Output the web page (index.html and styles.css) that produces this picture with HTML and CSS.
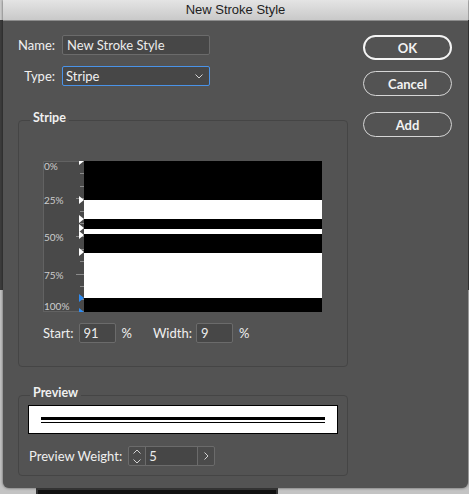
FILE: index.html
```html
<!DOCTYPE html>
<html lang="en">
<head>
    <meta charset="utf-8">
    <title>New Stroke Style</title>
    <link rel="stylesheet" href="styles.css">
</head>
<body>
<div class="window">
    <div class="titlebar">New Stroke Style</div>
    <div class="dialog">
        <div class="main">
            <div class="field-row">
                <label class="field-label" for="styleName">Name:</label>
                <input class="text-input" id="styleName" type="text" value="New Stroke Style">
            </div>
            <div class="field-row type-row">
                <label class="field-label">Type:</label>
                <div class="select">
                    <span>Stripe</span>
                    <svg class="chevron" width="8" height="5" viewBox="0 0 8 5">
                        <path d="M0.5 0.5L4 4L7.5 0.5" />
                    </svg>
                </div>
            </div>

            <fieldset class="group stripe-group">
                <legend>Stripe</legend>
                <div class="stripe-editor">
                    <svg class="ruler" width="41" height="151" viewBox="0 0 41 151">
                        <rect width="41" height="151" fill="#494949" />
                        <path d="M0.5 151V0.5H41M0 150.5H41" stroke="#626262" fill="none" />
                        <g stroke="#8a8a8a">
                            <path d="M37 12.5H41M37 25.5H41M37 50.5H41M37 62.5H41M37 88.5H41M37 100.5H41M37 125.5H41M37 138.5H41" />
                            <path d="M33 37.5H41M33 75.5H41M33 113.5H41" />
                        </g>
                        <g class="ruler-labels">
                            <text x="1" y="9">0%</text>
                            <text x="1" y="43">25%</text>
                            <text x="1" y="80">50%</text>
                            <text x="1" y="118">75%</text>
                            <text x="1" y="149">100%</text>
                        </g>
                        <!-- stripe edge handles -->
                        <g fill="#ffffff">
                            <polygon points="36,-4 41,0 36,4" />
                            <polygon points="36,35 41,39 36,43" />
                            <polygon points="36,54 41,58 36,62" />
                            <polygon points="36,63 41,67 36,71" />
                            <polygon points="36,70 41,74 36,78" />
                            <polygon points="36,87 41,91 36,95" />
                        </g>
                        <g fill="#2f8cf2">
                            <polygon points="36,133 41,137 36,141" />
                            <polygon points="36,147 41,151 36,155" />
                        </g>
                    </svg>
                    <div class="stripes">
                        <div class="stripe ink" style="height: 39px"></div>
                        <div class="stripe" style="height: 19px"></div>
                        <div class="stripe ink" style="height: 10px"></div>
                        <div class="stripe" style="height: 5px"></div>
                        <div class="stripe ink" style="height: 19px"></div>
                        <div class="stripe" style="height: 45px"></div>
                        <div class="stripe ink" style="height: 14px"></div>
                    </div>
                </div>
                <div class="stripe-fields">
                    <label class="small-label">Start:</label>
                    <input class="num-input" type="text" value="91">
                    <span class="unit">%</span>
                    <label class="small-label width-label">Width:</label>
                    <input class="num-input" type="text" value="9">
                    <span class="unit">%</span>
                </div>
            </fieldset>

            <fieldset class="group preview-group">
                <legend>Preview</legend>
                <div class="preview-box">
                    <div class="preview-stroke"></div>
                </div>
                <div class="weight-row">
                    <span class="small-label">Preview Weight:</span>
                    <div class="spinner">
                        <span class="spin-arrows">
                            <svg width="8" height="15" viewBox="0 0 8 15">
                                <path d="M0.5 4.5L4 1L7.5 4.5M0.5 10.5L4 14L7.5 10.5" />
                            </svg>
                        </span>
                        <span class="spin-value">5</span>
                        <span class="spin-next">
                            <svg width="5" height="8" viewBox="0 0 5 8">
                                <path d="M0.5 0.5L4 4L0.5 7.5" />
                            </svg>
                        </span>
                    </div>
                </div>
            </fieldset>
        </div>

        <div class="buttons">
            <button class="btn default" type="button">OK</button>
            <button class="btn" type="button">Cancel</button>
            <button class="btn add" type="button">Add</button>
        </div>
    </div>
</div>
<div class="dock"></div>
</body>
</html>
```

FILE: styles.css
```css
/* Page and window */
* {
    box-sizing: border-box;
}
html, body {
    margin: 0;
}
body {
    width: 469px;
    height: 494px;
    overflow: hidden;
    background: linear-gradient(to bottom, #cccccc 0, #cccccc 20px, #3d3d3d 20px, #3d3d3d 290px, #c3c3c3 290px);
    font-family: Lato, "Liberation Sans", sans-serif;
    font-size: 13px;
    color: #f0f0f0;
}
.window {
    display: flex;
    flex-direction: column;
    margin-left: 3px;
    width: 465px;
    height: 488px;
    background: #535353;
    border-radius: 0 0 6px 6px;
    box-shadow: 0 0 3px rgba(0, 0, 0, 0.6);
}
.titlebar {
    height: 21px;
    line-height: 20px;
    text-align: center;
    font-family: "Liberation Sans", sans-serif;
    font-size: 13px;
    color: #1e1e1e;
    background: linear-gradient(to bottom, #e4e4e4, #c9c9c9);
    border-bottom: 1px solid #8c8c8c;
}
.dialog {
    display: flex;
    padding: 14px 0 0 15px;
}
.main {
    width: 330px;
}

/* Name / Type rows */
.field-row {
    display: flex;
    align-items: center;
    height: 20px;
}
.type-row {
    margin-top: 11px;
}
.field-label {
    width: 37px;
    margin-right: 7px;
    text-align: right;
}
.text-input, .num-input {
    height: 20px;
    padding: 0 4px;
    background: #474747;
    border: 1px solid #6b6b6b;
    border-radius: 2px;
    color: #ececec;
    font: inherit;
    outline: none;
}
.text-input {
    width: 148px;
}
.select {
    display: flex;
    align-items: center;
    justify-content: space-between;
    width: 148px;
    height: 20px;
    padding: 0 6px 0 3px;
    background: #474747;
    border: 1px solid #4a93e8;
    border-radius: 2px;
}
.chevron path, .spinner path {
    fill: none;
    stroke: #d2d2d2;
    stroke-width: 1;
}

/* Group boxes */
.group {
    margin: 0;
    padding: 0;
    width: 330px;
    min-inline-size: 0;
    border: 1px solid #454545;
    border-radius: 4px;
}
.group legend {
    margin-left: 11px;
    padding: 0 3px 4px;
    font-size: 12.5px;
    font-weight: bold;
    line-height: 12px;
}
.stripe-group {
    margin-top: 26px;
    padding-bottom: 23px;
}
.preview-group {
    margin-top: 20px;
    padding-bottom: 9px;
}

/* Stripe editor */
.stripe-editor {
    display: flex;
    margin: 33px 0 0 24px;
    height: 151px;
}
.ruler {
    display: block;
}
.ruler-labels {
    font-family: Lato, "Liberation Sans", sans-serif;
    font-size: 10px;
    fill: #cdcdcd;
}
.stripes {
    width: 238px;
    background: #ffffff;
}
.stripe.ink {
    background: #000000;
}
.stripe-fields {
    display: flex;
    align-items: center;
    margin: 11px 0 0 24px;
    height: 20px;
}
.small-label {
    margin-right: 5px;
}
.num-input {
    width: 37px;
}
.unit {
    margin-left: 6px;
}
.width-label {
    margin-left: 21px;
}
.stripe-fields .width-label {
    margin-right: 4px;
}

/* Preview */
.preview-box {
    margin: 2px 0 0 9px;
    width: 310px;
    height: 29px;
    padding: 11px 12px 0;
    background: #ffffff;
    border: 1px solid #000000;
}
.preview-stroke {
    height: 7px;
    background: linear-gradient(to bottom, #000 0, #000 3.5px, #fff 3.5px, #fff 4.7px, #000 4.7px, #000 6.3px, #fff 6.3px);
}
.weight-row {
    display: flex;
    align-items: center;
    margin: 12px 0 0 10px;
    height: 20px;
}
.weight-row .small-label {
    margin-right: 6px;
}
.spinner {
    display: flex;
    height: 20px;
    border: 1px solid #6b6b6b;
    border-radius: 2px;
    background: #4b4b4b;
}
.spinner > span {
    display: flex;
    align-items: center;
}
.spin-arrows {
    justify-content: center;
    width: 17px;
    border-right: 1px solid #6b6b6b;
}
.spin-value {
    width: 51px;
    padding-left: 3px;
    background: #464646;
    color: #ececec;
}
.spin-next {
    justify-content: center;
    width: 17px;
    border-left: 1px solid #6b6b6b;
}

/* Buttons */
.buttons {
    display: flex;
    flex-direction: column;
    margin-left: 15px;
    width: 89px;
}
.btn {
    height: 25px;
    margin: 11px 0 0;
    padding: 0;
    background: transparent;
    border: 1px solid #d6d6d6;
    border-radius: 13px;
    color: #f2f2f2;
    font-family: Lato, "Liberation Sans", sans-serif;
    font-size: 13px;
    font-weight: bold;
}
.btn.default {
    margin-top: 0;
    border: 2px solid #f4f4f4;
}
.btn.add {
    margin-top: 16px;
}

/* What shows below the dialog */
.dock {
    margin-left: 36px;
    width: 242px;
    height: 6px;
    background: #111111;
    border: 2px solid #333333;
    border-bottom: none;
}
```
